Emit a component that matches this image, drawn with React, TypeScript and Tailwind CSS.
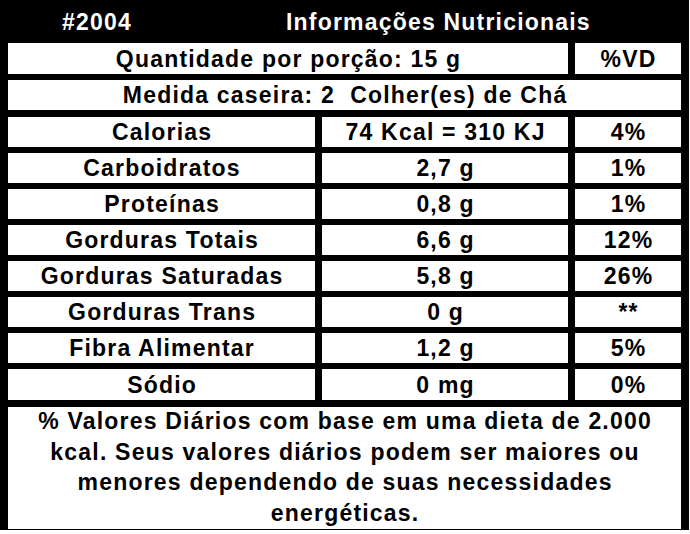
import React from "react";

const rows: [string, string, string][] = [
  ["Calorias", "74 Kcal = 310 KJ", "4%"],
  ["Carboidratos", "2,7 g", "1%"],
  ["Proteínas", "0,8 g", "1%"],
  ["Gorduras Totais", "6,6 g", "12%"],
  ["Gorduras Saturadas", "5,8 g", "26%"],
  ["Gorduras Trans", "0 g", "**"],
  ["Fibra Alimentar", "1,2 g", "5%"],
  ["Sódio", "0 mg", "0%"],
];

function Cell({ children, className = "" }: { children: React.ReactNode; className?: string }) {
  return (
    <div className={`bg-white flex items-center justify-center pl-[1.2px] whitespace-pre ${className}`}>
      {children}
    </div>
  );
}

export default function App() {
  return (
    <div className="w-[689px] h-[530px] bg-black px-[8px] pb-[8px] flex flex-col font-['Liberation_Sans',Arial,sans-serif] font-bold text-[23px] leading-[26px] tracking-[1.2px] text-black">
      <div className="h-[43px] shrink-0 flex items-center text-white">
        <span className="ml-[54px]">#2004</span>
        <span className="ml-[154px]">Informações Nutricionais</span>
      </div>
      <div className="h-[31px] shrink-0 flex gap-[7px]">
        <Cell className="w-[560px]">Quantidade por porção: 15 g</Cell>
        <Cell className="flex-1">%VD</Cell>
      </div>
      <Cell className="h-[30px] shrink-0 mt-[6px]">Medida caseira: 2  Colher(es) de Chá</Cell>
      <div className="mt-[7px] flex flex-col gap-[6px] shrink-0">
        {rows.map(([a, b, c], i) => (
          <div key={a} className={`flex gap-[7px] ${i === rows.length - 1 ? "h-[31px]" : "h-[30px]"}`}>
            <Cell className="w-[307px]">{a}</Cell>
            <Cell className="w-[246px]">{b}</Cell>
            <Cell className="flex-1">{c}</Cell>
          </div>
        ))}
      </div>
      <div className="mt-[7px] flex-1 bg-white text-center pl-[1.2px]">
        <div className="-mt-[1px] leading-[30.7px]">
          % Valores Diários com base em uma dieta de 2.000
          <br />
          kcal. Seus valores diários podem ser maiores ou
          <br />
          menores dependendo de suas necessidades
          <br />
          energéticas.
        </div>
      </div>
    </div>
  );
}
